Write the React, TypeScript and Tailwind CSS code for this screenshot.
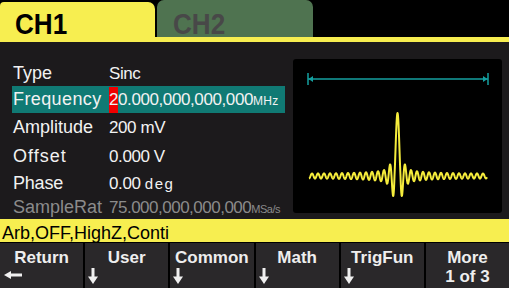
import React from "react";

const YELLOW = "bg-[#f7ee50]";

function sincPath() {
  // waveform drawn in panel coordinates (panel starts at x=293, y=59)
  const cx = 397.5;
  const w = 3.0;
  const pts: string[] = [];
  for (let x = 309; x <= 487; x += 0.25) {
    const d = x - cx;
    const u = d / w;
    const au = Math.abs(u);
    const s = u === 0 ? 1 : Math.sin(Math.PI * u) / (Math.PI * u);
    const gain = au < 1 ? 1 : 1 + 0.45 * Math.exp(-(((au - 1.5) / 2) ** 2));
    const ripple = 1.8 * Math.sin(Math.PI * au) * (1 - Math.exp(-((d / 12) ** 2)));
    const v = 63 * s * gain + ripple;
    const y = 176 - v;
    pts.push(`${(x - 293).toFixed(2)},${(y - 59).toFixed(2)}`);
  }
  return "M" + pts.join(" L");
}

function WavePanel() {
  const d = sincPath();
  return (
    <div className="ml-[8px] mt-[17px] w-[209px] h-[154px] bg-black rounded-[3px] shrink-0">
      <svg width="209" height="154" viewBox="0 0 209 154">
        <g stroke="#14a0a0" strokeWidth="1.5" fill="#14a0a0">
          <line x1="15" y1="20" x2="195" y2="20" />
          <line x1="15" y1="14" x2="15" y2="26" />
          <line x1="195" y1="14" x2="195" y2="26" />
          <polygon points="15.5,20 20,17 20,23" stroke="none" />
          <polygon points="194.5,20 190,17 190,23" stroke="none" />
        </g>
        <path d={d} fill="none" stroke="#f5ec3c" strokeWidth="2" strokeLinejoin="round" />
      </svg>
    </div>
  );
}

function DownArrow() {
  return (
    <svg width="10" height="16" viewBox="0 0 10 16" className="ml-[3px]">
      <rect x="3.5" y="0" width="3" height="10" fill="#f0f0f0" />
      <polygon points="0,8.5 10,8.5 5,16" fill="#f0f0f0" />
    </svg>
  );
}

function LeftArrow() {
  return (
    <svg width="18" height="8" viewBox="0 0 18 8" className="ml-[4px] mt-[3px]">
      <polygon points="0,4 7,0 7,8" fill="#f0f0f0" />
      <rect x="6" y="2.5" width="12" height="3" fill="#f0f0f0" />
    </svg>
  );
}

function SoftKey({ label, arrow }: { label: string; arrow?: "down" | "left" }) {
  return (
    <div className="flex-1 bg-[#2a282a] flex flex-col">
      <div className="pt-[5px] text-center text-[17px] leading-[20px] font-bold text-[#eeeeee]">
        {label}
      </div>
      {arrow === "down" && <DownArrow />}
      {arrow === "left" && <LeftArrow />}
    </div>
  );
}

export default function App() {
  return (
    <div className="w-[509px] h-[288px] bg-[#1c1a1c] flex flex-col overflow-hidden font-['Liberation_Sans',Arial,sans-serif] text-[#f2f2f2]">
      {/* channel tabs */}
      <div className="h-[37px] bg-black flex items-end shrink-0">
        <div className={`w-[155px] h-[35px] ${YELLOW} rounded-tl-[4px] rounded-tr-[7px] pl-[15px] pt-[10px]`}>
          <span className="inline-block text-[29px] leading-[24px] font-bold text-black scale-x-[0.9] origin-left">
            CH1
          </span>
        </div>
        <div className="ml-[2px] w-[156px] h-[37px] bg-[#4f7350] rounded-t-[7px] pl-[16px] pt-[12px]">
          <span className="inline-block text-[29px] leading-[24px] font-bold text-[#484848] scale-x-[0.9] origin-left">
            CH2
          </span>
        </div>
      </div>
      <div className={`h-[5px] ${YELLOW} shrink-0`} />

      {/* parameters + waveform */}
      <div className="h-[177px] flex shrink-0">
        <div className="ml-[12px] w-[273px] pt-[19px] text-[18px] whitespace-nowrap">
          <div className="leading-[24px]">
            <span className="inline-block w-[97px] pl-[1px]">Type</span>
            <span className="text-[17px] tracking-[-0.4px]">Sinc</span>
          </div>
          <div className="leading-[26px] bg-[#107a74]">
            <span className="inline-block w-[97px] pl-[1px] tracking-[0.4px]">Frequency</span>
            <span className="text-[17px] tracking-[-0.4px]">
              <span className="inline-block bg-[#f00000] w-[9px] tracking-normal">2</span>
              0.000,000,000,000
            </span>
            <span className="text-[12px] leading-none tracking-[0.3px]">MHz</span>
          </div>
          <div className="leading-[28px]">
            <span className="inline-block w-[97px] pl-[1px]">Amplitude</span>
            <span className="text-[17px] tracking-[-0.4px]">200 mV</span>
          </div>
          <div className="leading-[28px]">
            <span className="inline-block w-[97px] pl-[1px] tracking-[1px]">Offset</span>
            <span className="text-[17px] tracking-[-0.4px]">0.000 V</span>
          </div>
          <div className="leading-[24px]">
            <span className="inline-block w-[97px] pl-[1px] tracking-[-0.2px]">Phase</span>
            <span className="text-[17px] tracking-[-0.4px]">0.00 </span>
            <span className="text-[15px] leading-none tracking-[1.5px]">deg</span>
          </div>
          <div className="leading-[22px] text-[#8b8b8b]">
            <span className="inline-block w-[97px] pl-[1px]">SampleRat</span>
            <span className="text-[17px] tracking-[-0.5px]">75.000,000,000,000</span>
            <span className="text-[11px] leading-none tracking-[-0.5px]">MSa/s</span>
          </div>
        </div>
        <WavePanel />
      </div>

      {/* status bar */}
      <div className={`h-[23px] ${YELLOW} pl-[2px] pt-[4px] text-[18px] leading-[20px] text-black overflow-hidden shrink-0`}>
        Arb,OFF,HighZ,Conti
      </div>

      {/* soft keys */}
      <div className="h-[46px] flex gap-[2px] bg-black pt-[1px] shrink-0">
        <SoftKey label="Return" arrow="left" />
        <SoftKey label="User" arrow="down" />
        <SoftKey label="Common" arrow="down" />
        <SoftKey label="Math" arrow="down" />
        <SoftKey label="TrigFun" arrow="down" />
        <div className="flex-1 bg-[#2a282a] pt-[5px] text-center text-[17px] leading-[19px] font-bold text-[#eeeeee]">
          <div>More</div>
          <div>1 of 3</div>
        </div>
      </div>
    </div>
  );
}
